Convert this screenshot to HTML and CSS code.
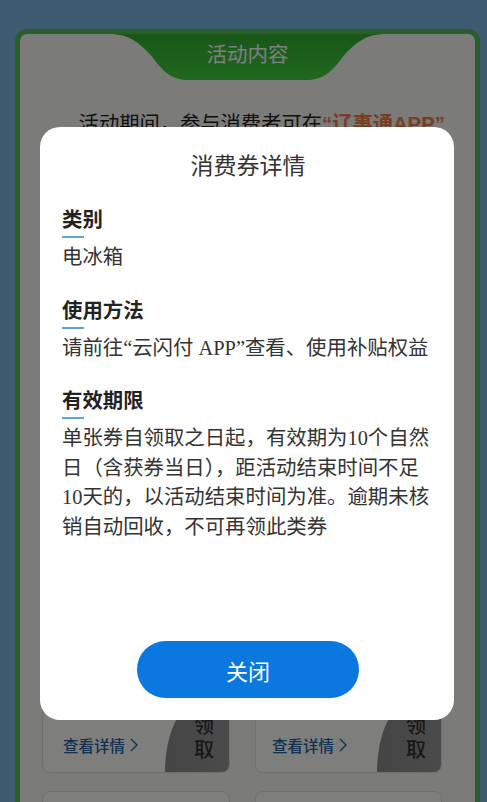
FILE: index.html
```html
<!DOCTYPE html>
<html lang="zh-CN">
<head>
<meta charset="utf-8">
<title>消费券详情</title>
<link rel="stylesheet" href="styles.css">
</head>
<body>
<div class="page">
  <section class="panel">
    <div class="tab">活动内容</div>
    <p class="intro">活动期间，参与消费者可在<span class="hl">“辽事通APP”</span></p>
    <div class="rules"></div>
    <div class="cards">
      <div class="card">
        <div class="card-main">
          <a class="more">查看详情<svg class="chev" viewBox="0 0 8 14" width="8" height="14"><path d="M1 1 L7 7 L1 13" fill="none" stroke="currentColor" stroke-width="1.4"/></svg></a>
        </div>
        <div class="claim"><span>领</span><span>取</span></div>
      </div>
      <div class="card">
        <div class="card-main">
          <a class="more">查看详情<svg class="chev" viewBox="0 0 8 14" width="8" height="14"><path d="M1 1 L7 7 L1 13" fill="none" stroke="currentColor" stroke-width="1.4"/></svg></a>
        </div>
        <div class="claim"><span>领</span><span>取</span></div>
      </div>
      <div class="card"></div>
      <div class="card"></div>
    </div>
  </section>
</div>

<div class="mask"></div>
<div class="modal">
  <h2 class="modal-title">消费券详情</h2>
  <div class="sec">
    <h3 class="sec-h">类别</h3>
    <p class="sec-t">电冰箱</p>
  </div>
  <div class="sec">
    <h3 class="sec-h">使用方法</h3>
    <p class="sec-t">请前往“云闪付 APP”查看、使用补贴权益</p>
  </div>
  <div class="sec">
    <h3 class="sec-h">有效期限</h3>
    <p class="sec-t">单张券自领取之日起，有效期为10个自然日（含获券当日），距活动结束时间不足10天的，以活动结束时间为准。逾期未核销自动回收，不可再领此类券</p>
  </div>
  <button class="close">关闭</button>
</div>
</body>
</html>
```
FILE: styles.css
```css
* { box-sizing: border-box; }
html, body { margin: 0; padding: 0; }
body {
  background: #78b6e0;
  font-family: "Noto Sans CJK SC", "Noto Sans", sans-serif;
  height: 802px;
  overflow: hidden;
}
.page {
  padding: 29px 7px 0 15px;
}
.panel {
  border: 5px solid #52bc50;
  border-radius: 12px;
  background: #f6f6f2;
  height: 820px;
}
.tab {
  width: 276px;
  height: 46px;
  margin: 0 auto;
  background: linear-gradient(#32ac32, #3fd23f);
  clip-path: path('M0 0 H276 C256 0 246 9 234 22 C222 38 214 46 196 46 H80 C62 46 54 38 42 22 C30 9 20 0 0 0 Z');
  color: #fff;
  font-size: 20.5px;
  line-height: 38px;
  text-align: center;
}
.intro {
  margin: 28px 0 0;
  padding: 0 18px;
  text-indent: 2em;
  font-family: "Liberation Sans", "Noto Sans CJK SC", sans-serif;
  font-size: 20.3px;
  line-height: 32px;
  color: #1e1e1e;
  white-space: nowrap;
  overflow: hidden;
}
.hl { color: #f27a44; font-weight: 700; }
.rules { height: 560px; }
.cards {
  display: grid;
  grid-template-columns: 188px 187px;
  column-gap: 25px;
  row-gap: 18px;
  padding: 0 0 0 22px;
}
.card {
  height: 73px;
  border: 1px solid #e0e0dc;
  border-radius: 8px;
  background: #fdfdfb;
  display: flex;
  overflow: hidden;
}
.card-main {
  flex: 1;
  display: flex;
  flex-direction: column;
  justify-content: flex-end;
  padding: 0 0 16px 20px;
}
.card:nth-child(even) .card-main { padding-left: 16px; }
.more {
  font-size: 15.5px;
  font-weight: 500;
  line-height: 22px;
  color: #28609f;
  display: flex;
  align-items: center;
  gap: 5px;
}
.chev { display: block; }
.claim {
  width: 64px;
  background: linear-gradient(90deg, #8a8a8a, #969696);
  border-top-left-radius: 36px 73px;
  display: flex;
  flex-direction: column;
  align-items: center;
  justify-content: center;
  padding-left: 14px;
  font-size: 20px;
  font-weight: 500;
  line-height: 24px;
  color: #2e2e2e;
}
.mask {
  position: fixed;
  inset: 0;
  background: rgba(0, 0, 0, 0.5);
}
.modal {
  position: fixed;
  left: 40px;
  top: 127px;
  width: 414px;
  height: 593px;
  background: #fff;
  border-radius: 20px;
  padding: 0 20px 22px 22px;
  display: flex;
  flex-direction: column;
  font-family: "Liberation Serif", "Noto Sans CJK SC", serif;
  color: #333;
}
.modal-title {
  margin: 21px 0 0;
  font-family: "Noto Sans CJK SC", sans-serif;
  font-size: 23px;
  font-weight: 400;
  line-height: 32px;
  text-align: center;
  color: #333;
}
.sec { margin-top: 22px; }
.sec:first-of-type { margin-top: 24px; }
.sec-h {
  margin: 0;
  font-family: "Noto Sans CJK SC", sans-serif;
  font-size: 20.4px;
  font-weight: 700;
  line-height: 28px;
  color: #222;
}
.sec-h::after {
  content: "";
  display: block;
  width: 22px;
  height: 2px;
  margin-top: 4px;
  background: #5aa6da;
}
.sec-t {
  margin: 5px 0 0;
  font-size: 20.4px;
  line-height: 29.6px;
  color: #333;
}
.close {
  margin: auto auto 0;
  width: 222px;
  height: 57px;
  border: 0;
  border-radius: 29px;
  background: #0b78e0;
  color: #fff;
  font-family: "Noto Sans CJK SC", sans-serif;
  font-size: 22px;
}
```
